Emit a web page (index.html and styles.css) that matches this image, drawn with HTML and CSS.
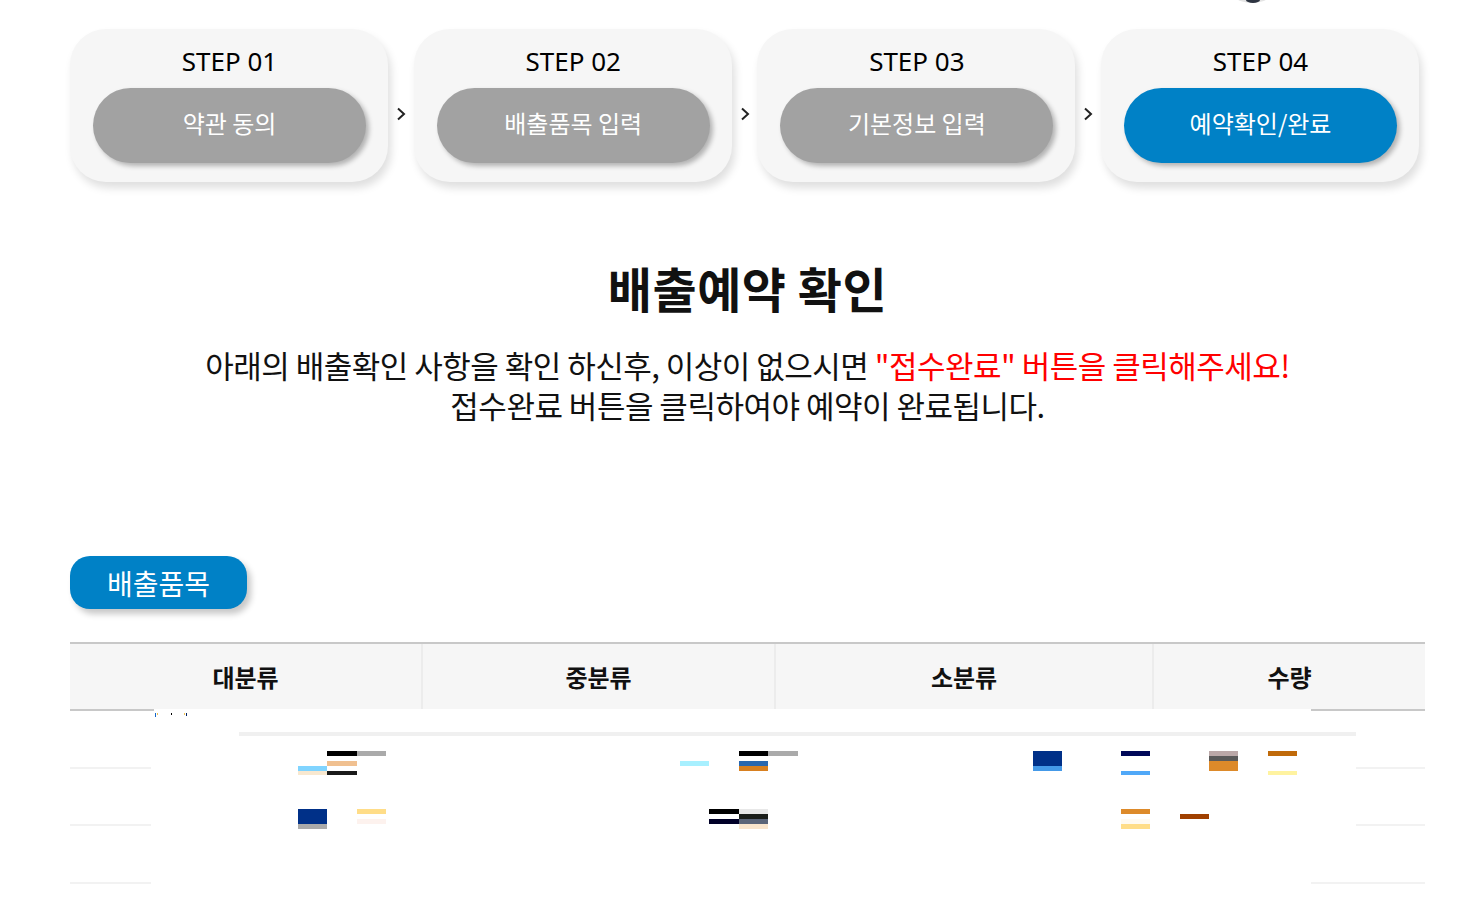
FILE: index.html
```html
<!DOCTYPE html>
<html>

<head>
  <meta charset="utf-8">
  <link rel="stylesheet" href="styles.css">
</head>

<body>
  <div class="top-strip">
    <svg width="1470" height="29" viewBox="0 0 1470 29">
      <ellipse cx="1252" cy="-20" rx="28" ry="23" fill="#e4e4e4"/>
      <ellipse cx="1253" cy="0" rx="7" ry="3" fill="#2e3542"/>
    </svg>
  </div>

  <div class="page">
    <div class="steps">
      <div class="step">
        <div class="step-label">STEP 01</div>
        <div class="step-pill">약관 동의</div>
      </div>
      <div class="step-arrow">
        <svg width="10" height="14" viewBox="0 0 10 14"><path d="M2 1.5 L8 7 L2 12.5" fill="none" stroke="#222" stroke-width="2"/></svg>
      </div>
      <div class="step">
        <div class="step-label">STEP 02</div>
        <div class="step-pill">배출품목 입력</div>
      </div>
      <div class="step-arrow">
        <svg width="10" height="14" viewBox="0 0 10 14"><path d="M2 1.5 L8 7 L2 12.5" fill="none" stroke="#222" stroke-width="2"/></svg>
      </div>
      <div class="step">
        <div class="step-label">STEP 03</div>
        <div class="step-pill">기본정보 입력</div>
      </div>
      <div class="step-arrow">
        <svg width="10" height="14" viewBox="0 0 10 14"><path d="M2 1.5 L8 7 L2 12.5" fill="none" stroke="#222" stroke-width="2"/></svg>
      </div>
      <div class="step">
        <div class="step-label">STEP 04</div>
        <div class="step-pill active">예약확인/완료</div>
      </div>
    </div>

    <h2 class="title">배출예약 확인</h2>
    <p class="desc">
      아래의 배출확인 사항을 확인 하신후, 이상이 없으시면 <span class="red">"접수완료" 버튼을 클릭해주세요!</span><br>
      접수완료 버튼을 클릭하여야 예약이 완료됩니다.
    </p>

    <div class="badge">배출품목</div>

    <div class="table-wrap">
      <table class="items">
        <colgroup>
          <col class="c1"><col class="c2"><col class="c3"><col class="c4">
        </colgroup>
        <thead>
          <tr><th>대분류</th><th>중분류</th><th>소분류</th><th>수량</th></tr>
        </thead>
        <tbody>
          <tr><td></td><td></td><td></td><td></td></tr>
          <tr><td></td><td></td><td></td><td></td></tr>
          <tr><td></td><td></td><td></td><td></td></tr>
        </tbody>
      </table>

      <!-- half-drawn rows still loading over the table -->
      <svg class="loading" width="1355" height="200" viewBox="0 0 1355 200">
        <rect x="84" y="0" width="1157" height="2" fill="#fff"/>
        <rect x="81" y="2" width="1160" height="198" fill="#fff"/>
        <rect x="81" y="22" width="1205" height="140" fill="#fff"/>
        <rect x="169" y="23" width="1117" height="4" fill="#f0f0f0"/>
        <rect x="85" y="4" width="1" height="4" fill="#1466c8"/>
        <rect x="87" y="4" width="1" height="2" fill="#f0c050"/>
        <rect x="101" y="4" width="1" height="2" fill="#000"/>
        <rect x="114" y="4" width="1" height="2" fill="#f0c050"/>
        <rect x="116" y="4" width="1" height="3" fill="#002060"/>

        <rect x="257" y="42" width="30" height="5" fill="#000"/>
        <rect x="287" y="42" width="29" height="5" fill="#aaa"/>
        <rect x="257" y="52" width="30" height="5" fill="#f0c090"/>
        <rect x="228" y="57" width="29" height="5" fill="#80d4ff"/>
        <rect x="257" y="62" width="30" height="4" fill="#1a1a1a"/>
        <rect x="228" y="62" width="29" height="4" fill="#f8e8d0"/>
        <rect x="228" y="100" width="29" height="15" fill="#003088"/>
        <rect x="228" y="115" width="29" height="5" fill="#aaa"/>
        <rect x="287" y="100" width="29" height="5" fill="#ffdd88"/>
        <rect x="287" y="110" width="29" height="5" fill="#fdf2ee"/>

        <rect x="610" y="52" width="29" height="5" fill="#a8f0ff"/>
        <rect x="669" y="42" width="29" height="5" fill="#000"/>
        <rect x="698" y="42" width="30" height="5" fill="#aaa"/>
        <rect x="669" y="52" width="29" height="5" fill="#2868b0"/>
        <rect x="669" y="57" width="29" height="5" fill="#d88020"/>
        <rect x="639" y="100" width="30" height="5" fill="#000"/>
        <rect x="669" y="100" width="29" height="5" fill="#e8e8e8"/>
        <rect x="669" y="105" width="29" height="5" fill="#1a1e1a"/>
        <rect x="639" y="110" width="30" height="5" fill="#000028"/>
        <rect x="669" y="110" width="29" height="5" fill="#5a6478"/>
        <rect x="669" y="115" width="29" height="5" fill="#f8e4cc"/>

        <rect x="963" y="42" width="29" height="15" fill="#003088"/>
        <rect x="963" y="57" width="29" height="5" fill="#4499e8"/>
        <rect x="1051" y="42" width="29" height="5" fill="#000858"/>
        <rect x="1051" y="62" width="29" height="4" fill="#50a8f8"/>
        <rect x="1139" y="42" width="29" height="5" fill="#bba8a8"/>
        <rect x="1139" y="47" width="29" height="5" fill="#5a5a5a"/>
        <rect x="1139" y="52" width="29" height="10" fill="#dd8a2a"/>
        <rect x="1198" y="42" width="29" height="5" fill="#c06a0a"/>
        <rect x="1198" y="62" width="29" height="4" fill="#fff3a0"/>
        <rect x="1051" y="100" width="29" height="5" fill="#dd8a2a"/>
        <rect x="1051" y="110" width="29" height="5" fill="#fffaf0"/>
        <rect x="1051" y="115" width="29" height="5" fill="#ffdd88"/>
        <rect x="1110" y="105" width="29" height="5" fill="#a04000"/>
      </svg>
    </div>
  </div>
</body>
</html>
```

FILE: styles.css
```css
body
{
   margin: 0;
   background: #fff;
   color: #111;
   font-family: "Noto Sans CJK KR", "Noto Sans", sans-serif;
}

.top-strip
{
   height: 29px;
}
.top-strip svg
{
   display: block;
}

.page
{
   width: 1355px;
   margin-left: 70px;
}

/* steps */
.steps
{
   display: flex;
   width: 1349px;
   justify-content: space-between;
}
.step
{
   width: 318px;
   box-sizing: border-box;
   padding: 15px 22px 19px 23px;
   background: #f6f6f6;
   border-radius: 36px;
   box-shadow: 3px 6px 9px rgba(0, 0, 0, 0.13);
}
.step-label
{
   font-family: "Noto Sans", "Noto Sans CJK KR", sans-serif;
   font-size: 26px;
   line-height: 34px;
   height: 34px;
   text-align: center;
   color: #000;
   margin-bottom: 10px;
}
.step-pill
{
   box-sizing: border-box;
   height: 75px;
   padding-bottom: 7px;
   border-radius: 38px;
   background: #a2a2a2;
   color: #fff;
   font-size: 24px;
   display: flex;
   align-items: center;
   justify-content: center;
   box-shadow: 3px 3px 5px rgba(0, 0, 0, 0.28);
}
.step-pill.active
{
   background: #0081c6;
}
.step-arrow
{
   flex: 1;
   display: flex;
   justify-content: center;
   padding-top: 78px;
}
.step-arrow svg
{
   display: block;
}

/* heading */
.title
{
   margin: 76px 0 0;
   font-size: 48px;
   line-height: 58px;
   font-weight: bold;
   letter-spacing: 0.5px;
   text-align: center;
   color: #111;
}
.desc
{
   margin: 29px 0 0;
   font-size: 31px;
   line-height: 40px;
   letter-spacing: -0.5px;
   text-align: center;
   color: #111;
}
.red
{
   color: #ff0000;
}

.badge
{
   margin-top: 131px;
   width: 177px;
   height: 53px;
   border-radius: 20px;
   background: #0081c6;
   color: #fff;
   font-size: 28px;
   display: flex;
   align-items: center;
   justify-content: center;
   box-shadow: 4px 5px 6px rgba(0, 0, 0, 0.22);
}

/* table */
.table-wrap
{
   position: relative;
   margin-top: 33px;
}
.items
{
   width: 1355px;
   table-layout: fixed;
   border-collapse: separate;
   border-spacing: 0;
   border-top: 2px solid #c8c8c8;
}
.c1 { width: 351px; }
.c2 { width: 353px; }
.c3 { width: 378px; }
.c4 { width: 273px; }
.items th
{
   box-sizing: border-box;
   height: 67px;
   padding: 0;
   background: #f6f6f6;
   border-bottom: 2px solid #c8c8c8;
   font-size: 24px;
   font-weight: bold;
   color: #111;
}
.items th + th
{
   border-left: 2px solid #ececec;
}
.items td
{
   box-sizing: border-box;
   height: 57.5px;
   padding: 0;
   border-bottom: 2px solid #f2f2f2;
}
.loading
{
   position: absolute;
   left: 0;
   top: 67px;
   display: block;
}
```
